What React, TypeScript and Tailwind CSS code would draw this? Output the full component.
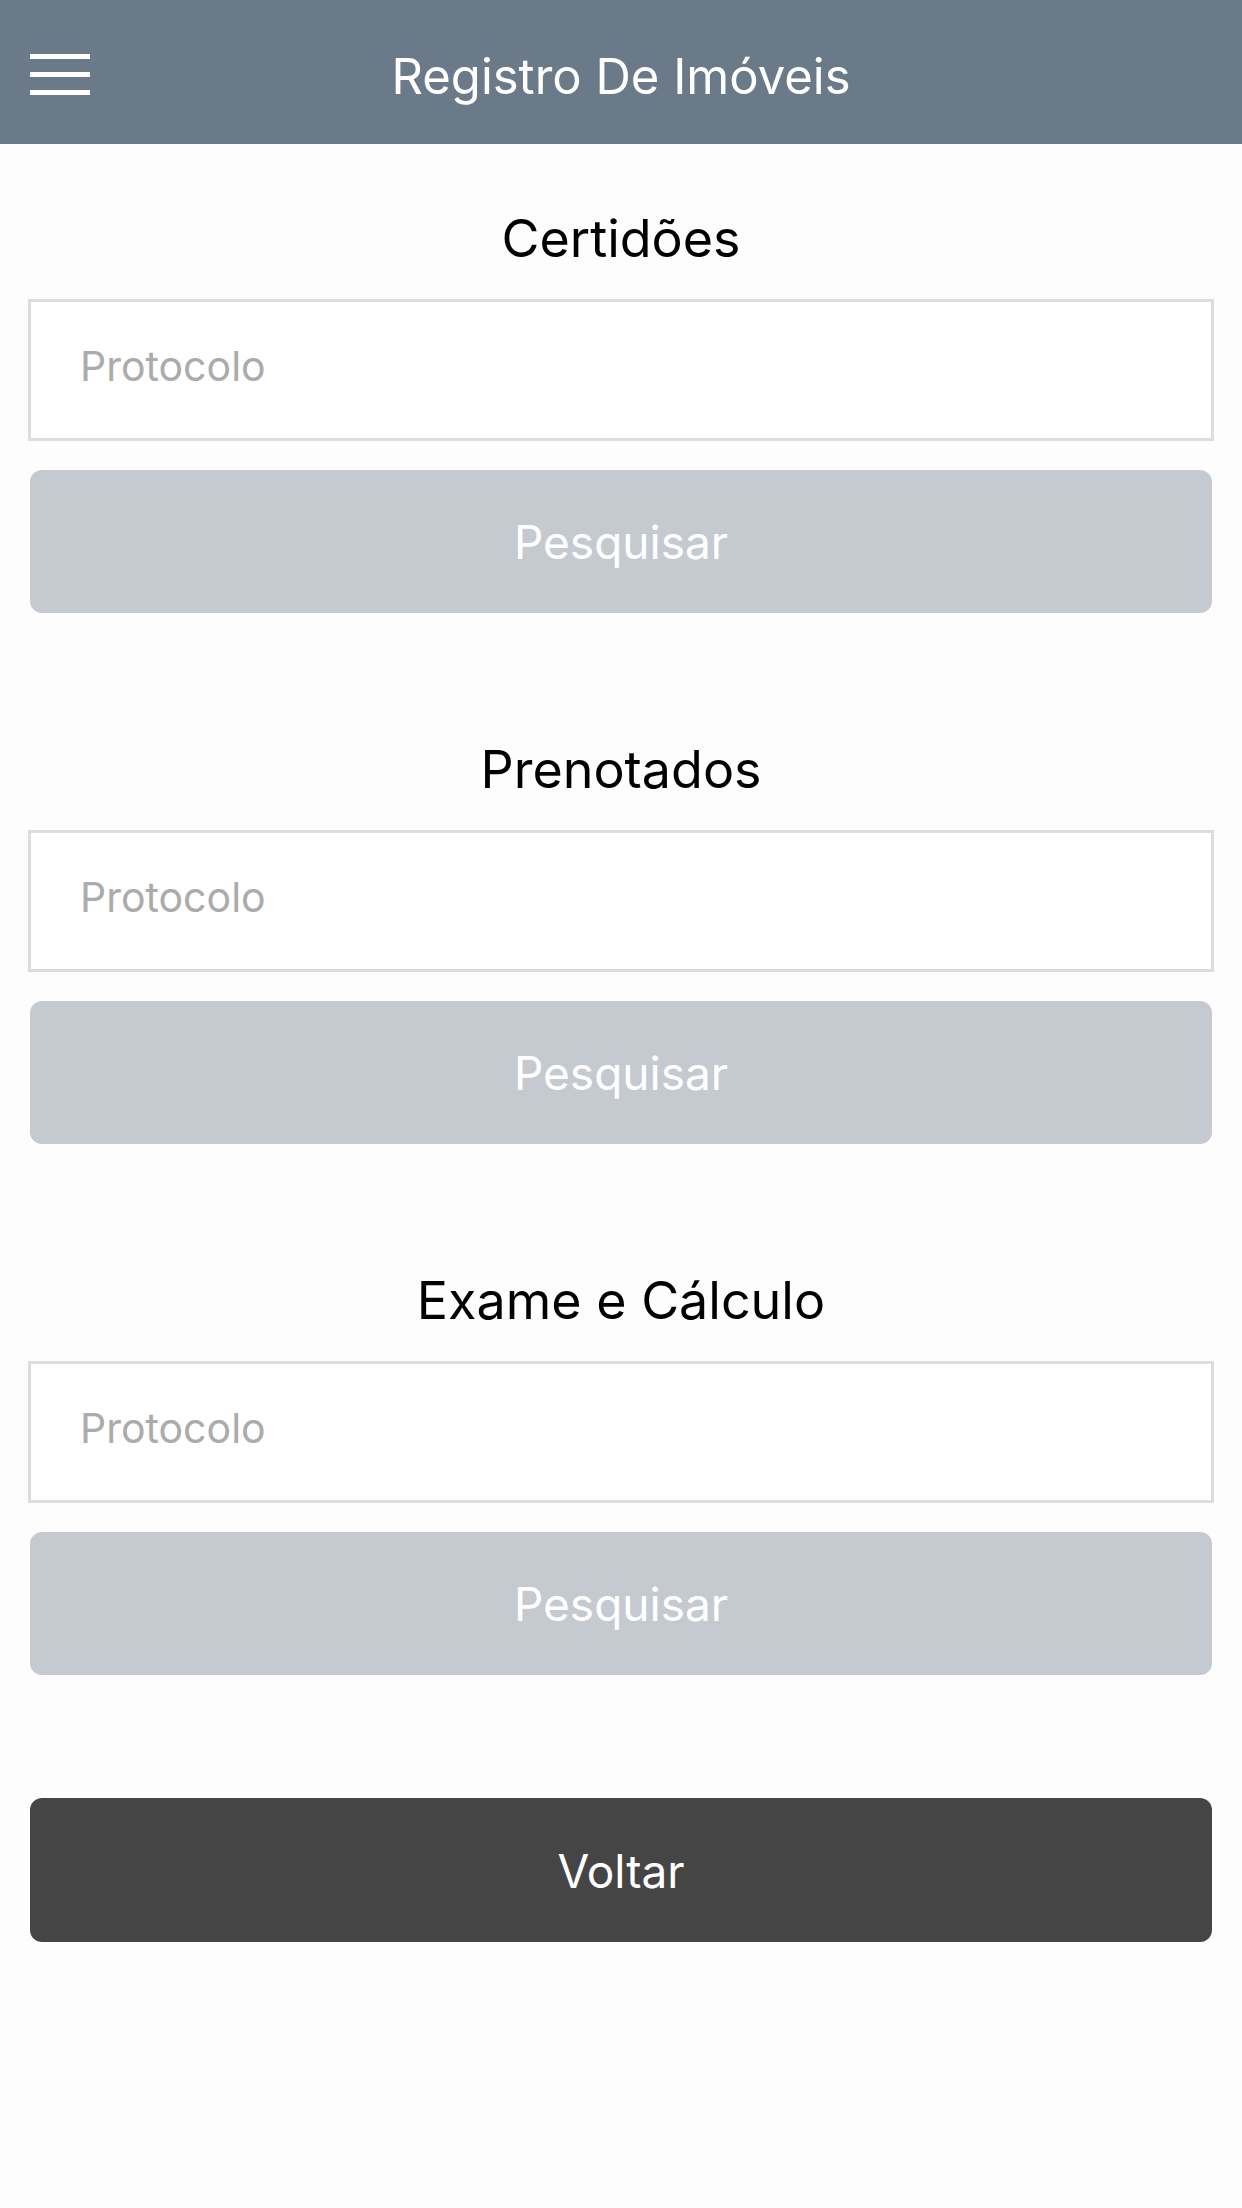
import React from 'react';

const sections = ['Certidões', 'Prenotados', 'Exame e Cálculo'];

function Header() {
  return (
    <header className="relative flex h-[144px] items-center justify-center bg-[#6b7a89] pt-[8px]">
      {/* menu button */}
      <button className="absolute left-[30px] top-[54px] flex w-[60px] flex-col gap-[13px]">
        <span className="h-[5px] w-full bg-white" />
        <span className="h-[5px] w-full bg-white" />
        <span className="h-[5px] w-full bg-white" />
      </button>
      <h1 className="text-[49px] font-normal leading-none text-white">Registro De Imóveis</h1>
    </header>
  );
}

function SearchSection({ title, first }: { title: string; first: boolean }) {
  return (
    <section className={first ? 'mt-[65px] flex flex-col' : 'mt-[127px] flex flex-col'}>
      <h2 className="h-[60px] text-center text-[52px] font-normal leading-[60px] text-black">{title}</h2>
      <input
        type="text"
        placeholder="Protocolo"
        className="mt-[30px] h-[142px] w-full border-[3px] border-[#dddddd] bg-white pb-[8px] pl-[49px] text-[41px] text-black outline-none placeholder:text-[#ababab]"
      />
      <button className="mx-[2px] mt-[29px] h-[143px] rounded-[12px] bg-[#c5cad1] pt-[2px] text-[46px] text-white">
        Pesquisar
      </button>
    </section>
  );
}

export default function App() {
  return (
    <div
      className="min-h-[2208px] w-full bg-[#fdfdfe]"
      style={{ fontFamily: 'Inter, "Noto Sans", sans-serif' }}
    >
      <Header />
      <main className="flex flex-col px-[28px]">
        {sections.map((s, i) => (
          <SearchSection key={s} title={s} first={i === 0} />
        ))}
        <button className="mx-[2px] mt-[123px] h-[144px] rounded-[12px] bg-[#464546] pt-[2px] text-[46px] text-white">
          Voltar
        </button>
      </main>
    </div>
  );
}
